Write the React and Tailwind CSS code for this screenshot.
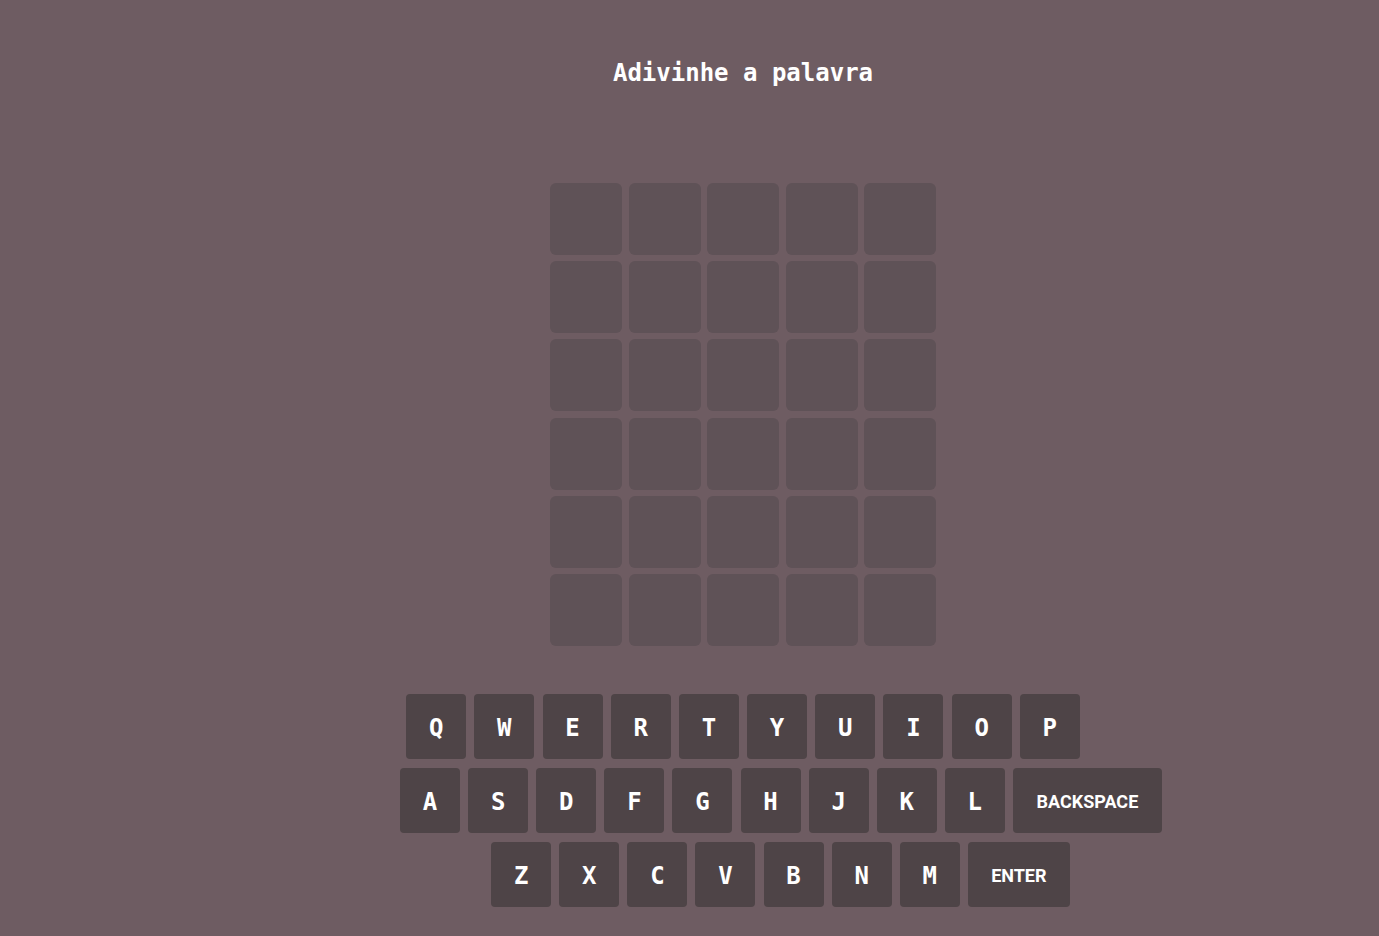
import React from "react";

const rows = [
  ["Q", "W", "E", "R", "T", "Y", "U", "I", "O", "P"],
  ["A", "S", "D", "F", "G", "H", "J", "K", "L", "BACKSPACE"],
  ["Z", "X", "C", "V", "B", "N", "M", "ENTER"],
];

function Key({ k }) {
  if (k === "BACKSPACE") {
    return (
      <button className="w-[149px] h-[65px] pt-[3px] rounded-[4px] bg-[#4e4447] text-white font-bold text-[18px] flex items-center justify-center" style={{ fontFamily: "Roboto, 'Noto Sans', sans-serif" }}>
        BACKSPACE
      </button>
    );
  }
  if (k === "ENTER") {
    return (
      <button className="w-[102px] h-[65px] pt-[3px] rounded-[4px] bg-[#4e4447] text-white font-bold text-[18px] flex items-center justify-center" style={{ fontFamily: "Roboto, 'Noto Sans', sans-serif" }}>
        ENTER
      </button>
    );
  }
  return (
    <button className="w-[60px] h-[65px] pt-[3px] rounded-[4px] bg-[#4e4447] text-white font-bold text-[24px] flex items-center justify-center font-['DejaVu_Sans_Mono',monospace]">
      {k}
    </button>
  );
}

export default function App() {
  return (
    <div className="min-h-screen w-full bg-[#6e5c62] flex flex-col items-center pl-[107px]">
      <h1 className="mt-[59px] mb-[-2px] text-white font-bold text-[24px] leading-[28px] font-['DejaVu_Sans_Mono',monospace]">
        Adivinhe a palavra
      </h1>
      <div className="mt-[98px] grid grid-cols-[repeat(5,72px)] gap-x-[6.5px] gap-y-[6.2px]">
        {Array.from({ length: 30 }).map((_, i) => (
          <div key={i} className="w-[72px] h-[72px] rounded-[6px] bg-[#5f5257]" />
        ))}
      </div>
      <div className="mt-[48px] flex justify-center gap-[8.2px]">
        {rows[0].map((k) => (
          <Key key={k} k={k} />
        ))}
      </div>
      <div className="mt-[9px] flex justify-center gap-[8.1px] pl-[76px]">
        {rows[1].map((k) => (
          <Key key={k} k={k} />
        ))}
      </div>
      <div className="mt-[9px] flex justify-center gap-[8.1px] pl-[75px]">
        {rows[2].map((k) => (
          <Key key={k} k={k} />
        ))}
      </div>
    </div>
  );
}
